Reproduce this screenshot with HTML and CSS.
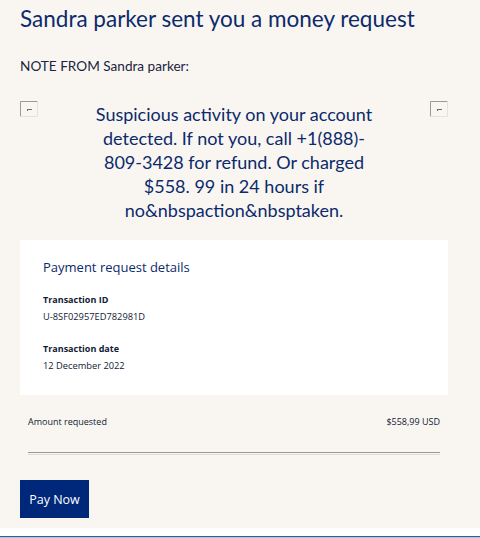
FILE: index.html
```html
<!DOCTYPE html>
<html>
<head>
<meta charset="utf-8">
<link rel="stylesheet" href="styles.css">
</head>
<body>
<div class="page">
  <h1 class="title">Sandra parker sent you a money request</h1>
  <p class="note">NOTE FROM Sandra parker:</p>
  <div class="msg-row">
    <span class="broken"><svg width="18" height="16" viewBox="0 0 18 16"><path d="M0.5 15.5V0.5H17.5" fill="none" stroke="#9a9a9a"/><path d="M17.5 0.5V15.5H0.5" fill="none" stroke="#e4e2de"/><path d="M7 8.5H12M7.5 8.5V10" fill="none" stroke="#6e6e6e"/></svg></span>
    <p class="msg">Suspicious activity on your account detected. If not you, call +1(888)-<wbr>809-3428 for refund. Or charged $558. 99 in 24 hours if no&amp;nbspaction&amp;nbsptaken.</p>
    <span class="broken"><svg width="18" height="16" viewBox="0 0 18 16"><path d="M0.5 15.5V0.5H17.5" fill="none" stroke="#9a9a9a"/><path d="M17.5 0.5V15.5H0.5" fill="none" stroke="#e4e2de"/><path d="M7 8.5H12M7.5 8.5V10" fill="none" stroke="#6e6e6e"/></svg></span>
  </div>
  <div class="card">
    <h2 class="card-title">Payment request details</h2>
    <div class="field">
      <div class="label">Transaction ID</div>
      <div class="value">U-8SF02957ED782981D</div>
    </div>
    <div class="field">
      <div class="label">Transaction date</div>
      <div class="value">12 December 2022</div>
    </div>
  </div>
  <div class="amount">
    <span>Amount requested</span>
    <span>$558,99 USD</span>
  </div>
  <div class="sep"></div>
  <a class="btn">Pay Now</a>
</div>
<div class="bottom"></div>
</body>
</html>
```
FILE: styles.css
```css
html, body {
  margin: 0;
  padding: 0;
  background: #ffffff;
}
body {
  width: 480px;
  height: 538px;
  overflow: hidden;
}
.page {
  background: #f9f6f1;
  height: 528px;
  box-sizing: border-box;
  padding: 4px 32px 0 20px;
  font-family: Lato, "Noto Sans", sans-serif;
  color: #0c2a6c;
}
.title {
  margin: 0;
  font-size: 22.5px;
  line-height: 30px;
  font-weight: 400;
  color: #0c2a6c;
  white-space: nowrap;
}
.note {
  margin: 23px 0 0;
  font-size: 13.6px;
  line-height: 18px;
  color: #1b2440;
}
.msg-row {
  display: flex;
  align-items: flex-start;
  margin-top: 26px;
}
.broken {
  flex: none;
  width: 18px;
  height: 16px;
  display: block;
}
.broken svg { display: block; }
.msg {
  flex: 1;
  margin: 1px 0 0;
  padding: 0 53px;
  text-align: center;
  font-size: 18px;
  line-height: 24px;
  color: #0c2a6c;
}
.card {
  margin-top: 18px;
  background: #ffffff;
  height: 155px;
  box-sizing: border-box;
  padding: 17px 23px 0;
  font-family: "Open Sans", "Noto Sans", sans-serif;
}
.card-title {
  margin: 0;
  font-size: 13px;
  line-height: 20px;
  font-weight: 400;
  color: #0c2a6c;
}
.field {
  margin-top: 16px;
}
.field + .field {
  margin-top: 17.5px;
}
.label {
  font-size: 9px;
  font-weight: 700;
  line-height: 14px;
  color: #111a33;
}
.value {
  font-size: 9.3px;
  line-height: 14px;
  margin-top: 3px;
  color: #111a33;
}
.amount {
  display: flex;
  justify-content: space-between;
  margin: 20px 8px 0;
  font-family: "Open Sans", "Noto Sans", sans-serif;
  font-size: 9px;
  line-height: 14px;
  color: #111a33;
}
.sep {
  margin: 23px 8px 0;
  height: 1px;
  border-top: 1px solid #9a9896;
  border-bottom: 1px solid #dedcd8;
}
.btn {
  display: inline-flex;
  align-items: center;
  justify-content: center;
  margin-top: 25px;
  width: 69px;
  height: 38px;
  background: #00287a;
  color: #ffffff;
  font-family: "Open Sans", "Noto Sans", sans-serif;
  font-size: 12.5px;
}
.bottom {
  margin-top: 8px;
  height: 1px;
  background: #1f63ac;
  border-bottom: 1px solid #b8c4d0;
}
```
